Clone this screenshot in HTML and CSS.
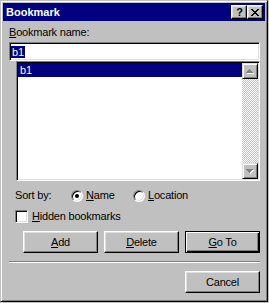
FILE: index.html
```html
<!DOCTYPE html>
<html lang="en">
<head>
    <meta charset="UTF-8">
    <title>Bookmark</title>
    <link rel="stylesheet" href="styles.css">
</head>
<body>
<div class="window">
    <div class="titlebar">
        <span class="title">Bookmark</span>
        <div class="title-buttons">
            <span class="tbtn help">?</span>
            <span class="tbtn close">
                <svg width="8" height="7" viewBox="0 0 8 7" shape-rendering="crispEdges">
                    <path d="M0 0h2v1h-2zM6 0h2v1h-2zM1 1h2v1h-2zM5 1h2v1h-2zM2 2h4v1h-4zM3 3h2v1h-2zM2 4h4v1h-4zM1 5h2v1h-2zM5 5h2v1h-2zM0 6h2v1h-2zM6 6h2v1h-2z" fill="#000"/>
                </svg>
            </span>
        </div>
    </div>
    <div class="content">
        <div class="label"><u>B</u>ookmark name:</div>
        <div class="field"><span class="sel">b1</span></div>
        <div class="listbox">
            <div class="items">
                <div class="item selected">b1</div>
            </div>
            <div class="scrollbar">
                <span class="sbtn">
                    <svg width="8" height="5" viewBox="0 0 8 5" shape-rendering="crispEdges">
                        <path d="M4 1h1v1h-1zM3 2h3v1h-3zM2 3h5v1h-5zM1 4h7v1h-7z" fill="#fff"/>
                        <path d="M3 0h1v1h-1zM2 1h3v1h-3zM1 2h5v1h-5zM0 3h7v1h-7z" fill="#808080"/>
                    </svg>
                </span>
                <span class="track"></span>
                <span class="sbtn">
                    <svg width="8" height="5" viewBox="0 0 8 5" shape-rendering="crispEdges">
                        <path d="M1 1h7v1h-7zM2 2h5v1h-5zM3 3h3v1h-3zM4 4h1v1h-1z" fill="#fff"/>
                        <path d="M0 0h7v1h-7zM1 1h5v1h-5zM2 2h3v1h-3zM3 3h1v1h-1z" fill="#808080"/>
                    </svg>
                </span>
            </div>
        </div>
        <div class="sort-row">
            <span class="sort-label">Sort by:</span>
            <span class="option first"><span class="radio checked"></span><span><u>N</u>ame</span></span>
            <span class="option"><span class="radio"></span><span><u>L</u>ocation</span></span>
        </div>
        <div class="check-row">
            <span class="checkbox"></span><span><u>H</u>idden bookmarks</span>
        </div>
        <div class="button-row">
            <span class="btn"><span><u>A</u>dd</span></span>
            <span class="btn"><span><u>D</u>elete</span></span>
            <span class="btn default"><span><u>G</u>o To</span></span>
        </div>
        <div class="separator"></div>
        <div class="button-row">
            <span class="btn">Cancel</span>
        </div>
    </div>
</div>
</body>
</html>
```

FILE: styles.css
```css
* {
    margin: 0;
    padding: 0;
    box-sizing: border-box;
}
body {
    background: #c0c0c0;
    font-family: "Liberation Sans", Arial, sans-serif;
    font-size: 11px;
    letter-spacing: -0.2px;
    color: #000;
}
u {
    text-decoration-thickness: 1px;
    text-underline-offset: 1px;
}
.window {
    width: 268px;
    height: 302px;
    padding: 2px;
    display: flex;
    flex-direction: column;
    background: #c0c0c0;
    border: 1px solid;
    border-color: #c0c0c0 #000 #000 #c0c0c0;
    box-shadow: inset 1px 1px #fff, inset -1px -1px #808080;
}

/* title bar */
.titlebar {
    height: 18px;
    display: flex;
    align-items: center;
    justify-content: space-between;
    padding: 0 2px 0 3px;
    background: #000080;
}
.title {
    color: #fff;
    font-weight: bold;
    letter-spacing: 0;
    line-height: 18px;
}
.title-buttons {
    display: flex;
}
.tbtn {
    width: 16px;
    height: 14px;
    display: flex;
    align-items: center;
    justify-content: center;
    background: #c0c0c0;
    border: 1px solid;
    border-color: #fff #000 #000 #fff;
    box-shadow: inset -1px -1px #808080, inset 1px 1px #dfdfdf;
}
.help {
    font-weight: bold;
    font-size: 11px;
    line-height: 12px;
    padding-left: 1px;
}
.close {
    margin-left: 0;
}

/* dialog body */
.content {
    padding: 5px 5px 0 6px;
    display: flex;
    flex-direction: column;
}
.label {
    line-height: 13px;
    height: 13px;
}
.field,
.listbox {
    background: #fff;
    border: 1px solid;
    border-color: #808080 #fff #fff #808080;
    box-shadow: inset 1px 1px #000, inset -1px -1px #dfdfdf;
}
.field {
    margin-top: 3px;
    height: 19px;
    padding: 3px 1px 0 1px;
}
.sel {
    display: inline-block;
    background: #000080;
    color: #fff;
    line-height: 12px;
    padding: 0 1px 0 1px;
}
.listbox {
    margin-left: 7px;
    height: 120px;
    padding: 1px;
    display: flex;
}
.items {
    flex: 1;
}
.item {
    height: 14px;
    line-height: 14px;
    padding-left: 2px;
}
.item.selected {
    background: #000080;
    color: #fff;
}
.scrollbar {
    width: 16px;
    display: flex;
    flex-direction: column;
}
.sbtn {
    width: 16px;
    height: 16px;
    display: flex;
    align-items: center;
    justify-content: center;
    background: #c0c0c0;
    border: 1px solid;
    border-color: #dfdfdf #000 #000 #dfdfdf;
    box-shadow: inset 1px 1px #fff, inset -1px -1px #808080;
}
.track {
    flex: 1;
    background-color: #c0c0c0;
    background-image: conic-gradient(#fff 25%, #c0c0c0 0 50%, #fff 0 75%, #c0c0c0 0);
    background-size: 2px 2px;
}

/* options */
.sort-row,
.check-row {
    height: 13px;
    display: flex;
    align-items: center;
    padding-left: 6px;
    line-height: 13px;
}
.sort-row {
    margin-top: 8px;
}
.sort-label {
    width: 56px;
}
.option {
    display: flex;
    align-items: center;
    gap: 3px;
}
.option.first {
    width: 62px;
}
.radio {
    position: relative;
    width: 12px;
    height: 12px;
    border-radius: 50%;
    background: #fff;
    border: 1px solid;
    border-color: #808080 #fff #fff #808080;
    box-shadow: inset 1px 1px #000, inset -1px -1px #dfdfdf;
}
.radio.checked::after {
    content: "";
    position: absolute;
    left: 3px;
    top: 3px;
    width: 4px;
    height: 4px;
    border-radius: 50%;
    background: #000;
}
.check-row {
    margin-top: 8px;
    gap: 4px;
}
.checkbox {
    width: 13px;
    height: 13px;
    background: #fff;
    border: 1px solid;
    border-color: #808080 #fff #fff #808080;
    box-shadow: inset 1px 1px #000, inset -1px -1px #dfdfdf;
}

/* buttons */
.button-row {
    margin-top: 8px;
    display: flex;
    justify-content: flex-end;
    gap: 6px;
}
.btn {
    width: 75px;
    height: 22px;
    display: flex;
    align-items: center;
    justify-content: center;
    background: #c0c0c0;
    border: 1px solid;
    border-color: #fff #000 #000 #fff;
    box-shadow: inset -1px -1px #808080, inset 1px 1px #dfdfdf;
}
.btn.default {
    border-color: #000;
    box-shadow: inset 1px 1px #fff, inset -1px -1px #000, inset -2px -2px #808080;
}
.separator {
    margin-top: 8px;
    height: 2px;
    border-top: 1px solid #808080;
    border-bottom: 1px solid #fff;
}
```
